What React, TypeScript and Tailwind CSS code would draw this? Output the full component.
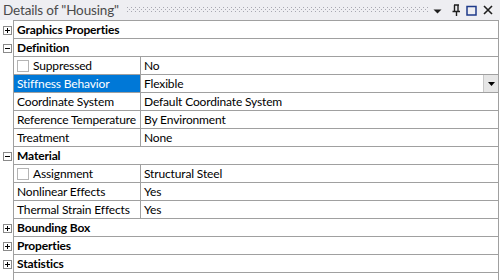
const font = "font-['Lato',sans-serif]";

type Row =
  | { kind: "cat"; label: string; open: boolean }
  | { kind: "prop"; label: string; value: string; check?: boolean; selected?: boolean; dropdown?: boolean };

const rows: Row[] = [
  { kind: "cat", label: "Graphics Properties", open: false },
  { kind: "cat", label: "Definition", open: true },
  { kind: "prop", label: "Suppressed", value: "No", check: true },
  { kind: "prop", label: "Stiffness Behavior", value: "Flexible", selected: true, dropdown: true },
  { kind: "prop", label: "Coordinate System", value: "Default Coordinate System" },
  { kind: "prop", label: "Reference Temperature", value: "By Environment" },
  { kind: "prop", label: "Treatment", value: "None" },
  { kind: "cat", label: "Material", open: true },
  { kind: "prop", label: "Assignment", value: "Structural Steel", check: true },
  { kind: "prop", label: "Nonlinear Effects", value: "Yes" },
  { kind: "prop", label: "Thermal Strain Effects", value: "Yes" },
  { kind: "cat", label: "Bounding Box", open: false },
  { kind: "cat", label: "Properties", open: false },
  { kind: "cat", label: "Statistics", open: false },
];

const ExpandBox = ({ open }: { open: boolean }) => (
  <svg width="9" height="9" viewBox="0 0 9 9" className="block">
    <rect x="0.5" y="0.5" width="8" height="8" fill="white" stroke="#8a8a8a" />
    <line x1="2" y1="4.5" x2="7" y2="4.5" stroke="#000" />
    {!open && <line x1="4.5" y1="2" x2="4.5" y2="7" stroke="#000" />}
  </svg>
);

const Grip = () => (
  <svg className="flex-1 h-[6px] ml-[8px] mr-[4px]" preserveAspectRatio="none">
    <defs>
      <pattern id="grip" width="4" height="4" patternUnits="userSpaceOnUse">
        <rect x="0" y="0" width="1" height="1" fill="#a8a8b2" />
        <rect x="2" y="2" width="1" height="1" fill="#a8a8b2" />
      </pattern>
    </defs>
    <rect width="100%" height="100%" fill="url(#grip)" />
  </svg>
);

const TitleBar = () => (
  <div className="h-[20px] bg-[#eeeef2] flex items-center pl-[3px] pr-[7px]">
    <span className={`${font} text-[13.5px] text-[#4a4a4a] leading-[20px] whitespace-nowrap`}>
      Details of "Housing"
    </span>
    <Grip />
    <svg width="9" height="5" viewBox="0 0 9 5" className="mr-[9px] mt-[2px]">
      <path d="M0.5 0.5 L8.5 0.5 L4.5 4.5 Z" fill="#1e1e1e" />
    </svg>
    <svg width="10" height="12" viewBox="0 0 10 12" className="mr-[5px]">
      <path d="M3 1 H8 M3.5 1 V7 M7 1 V7 M1.5 7.5 H9 M5.5 8 V12" stroke="#1e1e1e" strokeWidth="1.4" fill="none" />
    </svg>
    <svg width="11" height="11" viewBox="0 0 11 11" className="mr-[6px]">
      <rect x="1" y="1.5" width="9" height="8.5" fill="none" stroke="#1e3a8a" strokeWidth="1.5" />
    </svg>
    <svg width="10" height="10" viewBox="0 0 10 10">
      <path d="M1 1 L9 9 M9 1 L1 9" stroke="#1e1e1e" strokeWidth="1.6" />
    </svg>
  </div>
);

const PropRow = ({ row }: { row: Extract<Row, { kind: "prop" }> }) => (
  <div className="flex h-[18px] border-b border-[#a0a0a0]">
    <div
      className={`w-[127px] shrink-0 border-r border-[#a0a0a0] flex items-center pl-[3px] ${
        row.selected ? "bg-[#0078d7] text-white" : "text-black"
      }`}
    >
      {row.check && (
        <span className="w-[12px] h-[12px] border border-[#b4b4b4] bg-white mr-[4px] shrink-0" />
      )}
      <span className="whitespace-nowrap">{row.label}</span>
    </div>
    <div className="flex-1 flex items-center pl-[3px] relative">
      <span className="whitespace-nowrap">{row.value}</span>
      {row.dropdown && (
        <div className="absolute right-0 top-0 h-[17px] w-[15px] bg-[#e6e6e6] border-l border-[#c8c8c8] flex items-center justify-center">
          <svg width="7" height="4" viewBox="0 0 7 4">
            <path d="M0 0 H7 L3.5 4 Z" fill="#000" />
          </svg>
        </div>
      )}
    </div>
  </div>
);

const CatRow = ({ label }: { label: string }) => (
  <div className="flex h-[18px] border-b border-[#a0a0a0] items-center pl-[3px] font-bold">
    <span className="whitespace-nowrap">{label}</span>
  </div>
);

export default function App() {
  return (
    <div className={`${font} w-[500px] h-[280px] bg-white overflow-hidden text-[12px] leading-[17px] tracking-[-0.15px]`}>
      <TitleBar />
      <div className="flex h-[260px]">
        <div className="w-[14px] shrink-0 border-r border-[#a0a0a0] pt-[1px]">
          {rows.map((row, i) => (
            <div key={i} className="h-[18px] flex items-center pl-[3px]">
              {row.kind === "cat" && <ExpandBox open={row.open} />}
            </div>
          ))}
        </div>
        <div className="w-[485px] shrink-0 border-t border-r border-[#a0a0a0]">
          {rows.map((row, i) =>
            row.kind === "cat" ? <CatRow key={i} label={row.label} /> : <PropRow key={i} row={row} />
          )}
        </div>
      </div>
    </div>
  );
}
